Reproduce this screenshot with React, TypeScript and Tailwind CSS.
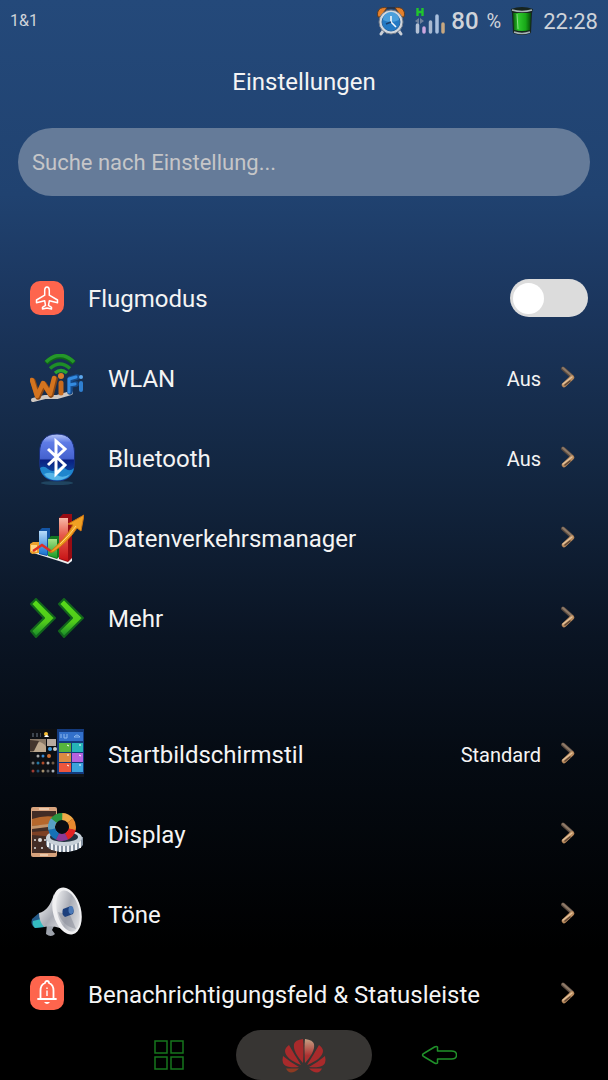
import { useState } from "react"
import type { ReactNode } from "react"

function AlarmIcon() {
  return (
    <svg viewBox="0 0 28 30" className="h-[30px] w-7" aria-hidden="true">
      <path d="M6 25l-2 3M22 25l2 3" stroke="#c9ced6" strokeWidth="3" strokeLinecap="round" />
      <path d="M1 11C-1 5 3 0 10 2L3 11z" fill="#e5802c" stroke="#5b3a20" strokeWidth="1" />
      <path d="M27 11c2-6-2-11-9-9l7 9z" fill="#e5802c" stroke="#5b3a20" strokeWidth="1" />
      <path d="M10 2h8" stroke="#27344c" strokeWidth="2" />
      <circle cx="14" cy="16" r="12" fill="#d3d7dd" stroke="#707987" strokeWidth="1" />
      <circle cx="14" cy="16" r="9" fill="#2379c4" stroke="#2467a5" strokeWidth="1" />
      <path d="M6 14a8 8 0 0 1 16 0q-8 4-16 0z" fill="#4b9fdc" />
      <path d="M14 10v6l5 5" fill="none" stroke="#f4f8fc" strokeWidth="1.6" />
      <path d="M9 18l5-2" stroke="#1b3f6d" strokeWidth="1.5" />
    </svg>
  )
}

function SignalIcon() {
  return (
    <svg viewBox="0 0 30 26" className="h-[26px] w-[30px]" aria-hidden="true">
      <path d="M2.500 0v8M7.500 0v8M2 4h5.500" fill="none" stroke="#20c52d" strokeWidth="2.400" />
      <path d="M0 13l4-3v6zM9 13l-4-3v6z" fill="#6f819c" />
      <g strokeWidth="3.500" strokeLinecap="round">
        <path d="M2.500 17v7" stroke="#b5c2d6" />
        <path d="M9 20v4" stroke="#cda7df" />
        <path d="M15.500 14v10" stroke="#a9b9d0" />
        <path d="M22 8v16" stroke="#a9bfdd" />
        <path d="M28 16v8" stroke="#c7a780" />
      </g>
    </svg>
  )
}

function BatteryIcon() {
  return (
    <svg viewBox="0 0 22 30" className="h-[30px] w-[22px]" aria-hidden="true">
      <defs>
        <linearGradient id="charge">
          <stop offset="0" stopColor="#075d08" />
          <stop offset=".3" stopColor="#2fc92d" />
          <stop offset=".7" stopColor="#18a818" />
          <stop offset="1" stopColor="#064b08" />
        </linearGradient>
      </defs>
      <path d="M0 3q11-4 22 0l-1 4-1 20q-9 4-18 0L1 7z" fill="#17241e" />
      <path d="M2 7h18l-1 17q-8 2-16 0z" fill="url(#charge)" />
      <path d="M1 4q10 3 20 0M3 26q8 3 16 0" fill="none" stroke="#a6b3b5" strokeWidth="1.500" />
      <path d="M6 8l1 15" stroke="#8be086" strokeWidth="1" />
    </svg>
  )
}

function PlaneIcon() {
  return (
    <svg viewBox="0 0 34 34" className="mb-0.5 size-[34px]" aria-hidden="true">
      <rect width="34" height="34" rx="10" fill="#fe654d" />
      <path
        d="M17 6c-1.500 0-2.300 1.500-2.300 3.500v4.700L6.500 19v2.800l8.200-2 .8 4.500-3 2V28l4.500-1 4.500 1v-1.700l-3-2 .8-4.500 8.200 2V19l-8.200-4.800V9.500C19.300 7.500 18.500 6 17 6z"
        fill="none"
        stroke="#fff"
        strokeWidth="1.500"
        strokeLinejoin="round"
      />
    </svg>
  )
}

function BellIcon() {
  return (
    <svg viewBox="0 0 34 34" className="mb-1 size-[34px]" aria-hidden="true">
      <rect width="34" height="34" rx="10" fill="#fe654d" />
      <path
        d="M8 23h18M10.500 22.500v-8c0-4 2-6.500 4.500-7.500V7a2 2 0 0 1 4 0c2.500 1 4.500 3.500 4.500 7.500v8"
        fill="none"
        stroke="#fff"
        strokeWidth="1.800"
        strokeLinecap="round"
      />
      <path d="M17 14.500V20M17 11.500v1.500" stroke="#fff" strokeWidth="1.400" />
      <path d="M14 26h6q-3 4-6 0z" fill="#fff" />
    </svg>
  )
}

function WifiIcon() {
  return (
    <svg viewBox="0 0 54 50" className="h-[50px] w-[54px]" fill="none" strokeLinecap="round" strokeLinejoin="round" aria-hidden="true">
      <path d="M3 46l12-3 12 0 14-4" stroke="#cfc8c2" strokeWidth="4" />
      <path d="M16 9q14-14 28 0" stroke="#0e6518" strokeWidth="5" strokeLinecap="butt" />
      <path d="M16 8q14-13 28 0" stroke="#25972b" strokeWidth="3.500" strokeLinecap="butt" />
      <path d="M20 14.500q10-9 20 0" stroke="#1e8e27" strokeWidth="3.500" strokeLinecap="butt" />
      <path d="M25 19q6-5 12 0" stroke="#27a431" strokeWidth="3.500" strokeLinecap="butt" />
      <path d="M3 27l5 16 6-13 7 11 4-16" stroke="#8a4613" strokeWidth="5.500" />
      <path d="M2 26l5 16 6-13 7 11 4-16" stroke="#d4741f" strokeWidth="4.500" />
      <path d="M31 29v10" stroke="#c96b1d" strokeWidth="5" />
      <circle cx="31" cy="22" r="3" fill="#d97c28" />
      <path d="M40 38V25l7-2M40 31l6-1" stroke="#164b8b" strokeWidth="5.500" />
      <path d="M39 38V25l7-2M39 31l6-1" stroke="#348be1" strokeWidth="3" />
      <path d="M51 29v7" stroke="#2f7fd0" strokeWidth="4" />
      <circle cx="51" cy="23" r="2" fill="#5ca7ed" />
    </svg>
  )
}

function BluetoothIcon() {
  return (
    <svg viewBox="0 0 54 52" className="h-[52px] w-[54px]" aria-hidden="true">
      <defs>
        <linearGradient id="blueGlass" x2="0" y2="1">
          <stop offset="0" stopColor="#b7c6f5" />
          <stop offset=".18" stopColor="#5f7ce6" />
          <stop offset=".52" stopColor="#4562cf" />
          <stop offset=".56" stopColor="#0a2080" />
          <stop offset="1" stopColor="#0d5fb4" />
        </linearGradient>
      </defs>
      <ellipse cx="27" cy="50" rx="16" ry="2" fill="#295b78" opacity=".6" />
      <path
        d="M27 1c12 0 17 7 17.500 18v11C44 42 38 48 27 48S10 42 9.500 30V19C10 8 15 1 27 1z"
        fill="url(#blueGlass)"
        stroke="#182f79"
      />
      <path d="M10 35q4-3 8 1 5 4 9 0 5-4 9 0 4 3 8-1-2 12-17 12.500Q12 47 10 35z" fill="#1f86cd" />
      <path d="M14 41q7-3 13 1t13-1q-4 6-13 6t-13-6z" fill="#55b5e8" />
      <path d="M18 16l17 16-9 9V8l9 8-17 16" fill="none" stroke="#fff" strokeWidth="3" strokeLinejoin="miter" />
    </svg>
  )
}

function ChartIcon() {
  return (
    <svg viewBox="0 0 54 50" className="h-[50px] w-[54px]" aria-hidden="true">
      <defs>
        <linearGradient id="barRed" x2="0" y2="1">
          <stop stopColor="#f8b8a7" />
          <stop offset=".4" stopColor="#e65a4a" />
          <stop offset="1" stopColor="#c71115" />
        </linearGradient>
        <linearGradient id="barBlue" x2="0" y2="1">
          <stop stopColor="#b8dcfa" />
          <stop offset="1" stopColor="#1672cf" />
        </linearGradient>
        <linearGradient id="barGreen" x2="0" y2="1">
          <stop stopColor="#a5e287" />
          <stop offset="1" stopColor="#189a24" />
        </linearGradient>
      </defs>
      <path d="M0 38l29 9 9 3 4-3v-5L2 36z" fill="#eee" />
      <path d="M0 30l3-2h6v11l-7 1-2-2z" fill="#eda12c" />
      <path d="M1 31h6v7l-6-1z" fill="#ffd584" />
      <path d="M9 17l3-3h8v25l-3 3-8-2z" fill="#1455a5" />
      <path d="M9 17h8v24l-8-2z" fill="url(#barBlue)" />
      <path d="M18 25l3-3h9v20l-3 3-9-3z" fill="#137722" />
      <path d="M18 25h9v19l-9-3z" fill="url(#barGreen)" />
      <path d="M29 4l4-4h9v44l-4 4-9-3z" fill="#980c13" />
      <path d="M29 4h9v43l-9-3z" fill="url(#barRed)" />
      <path d="M3 37l9-6 10 7" fill="none" stroke="#df2e25" strokeWidth="2.500" />
      <path d="M20 38Q36 24 43 11l-5-1 16-9-3 16-4-3Q38 28 23 38z" fill="#f0a023" stroke="#cf7412" />
      <path d="M30 30q10-9 16-18" fill="none" stroke="#ffd676" strokeWidth="1" />
    </svg>
  )
}

function MoreIcon() {
  return (
    <svg viewBox="0 0 54 40" className="mb-0.5 h-10 w-[54px]" aria-hidden="true">
      <defs>
        <linearGradient id="moreGreen" x2="0" y2="1">
          <stop stopColor="#58da1a" />
          <stop offset=".6" stopColor="#50cb1a" />
          <stop offset="1" stopColor="#16882c" />
        </linearGradient>
      </defs>
      <g fill="url(#moreGreen)" stroke="#12661c" strokeWidth="2" strokeLinejoin="round">
        <path d="M1 6l5-5 19 19L6 39l-5-6 13-13z" />
        <path d="M29 6l5-5 19 19-19 19-5-6 13-13z" />
      </g>
    </svg>
  )
}

function HomeStyleIcon() {
  const dots = ["#8f8f8f", "#2b91c7", "#d95a30", "#d2d2d2", "#8b6d52", "#c5493c", "#2b6289", "#c9ae82", "#7b7b7b", "#cfd6dd"]
  return (
    <svg viewBox="0 0 54 48" className="mb-1 h-12 w-[54px]" aria-hidden="true">
      <rect width="27" height="48" fill="#0d0f13" />
      <path d="M0 10h16v13H0z" fill="#897866" />
      <path d="M1 20q4-7 9-7 5 2 6 5v5H4z" fill="#bda78d" />
      <path d="M0 11l9 1-5 10H0z" fill="#44352d" />
      <path d="M17 10h9v7h-9z" fill="#b8aaa0" />
      <circle cx="20" cy="20" r="2" fill="#3c9adf" />
      <circle cx="25" cy="20" r="2" fill="#ccc" />
      <path d="M2 4h2v4H2zM6 4h2v4H6zM10 4h1v4h-1z" fill="#3d444d" />
      <circle cx="16" cy="5" r="2" fill="#f6bd32" />
      <path d="M14 8q3-4 5 0z" fill="#fff" />
      {dots.map((color, i) => (
        <circle key={i} cx={3 + (i % 5) * 5} cy={i < 5 ? 34 : 42} r="1.500" fill={color} opacity=".8" />
      ))}
      <circle cx="8" cy="27" r="1.500" fill="#a9a9a9" />
      <circle cx="13" cy="27" r="1.500" fill="#398ad2" />
      <circle cx="19" cy="27" r="2" fill="#cf6e31" />
      <rect x="27" width="27" height="46" fill="#143a7c" />
      <rect x="29" y="3" width="24" height="9" fill="#3270cb" />
      <path d="M31 5v4M34 5v4h3V5M44 8q3-4 6 0z" fill="none" stroke="#8bb7ef" />
      <path d="M29 14h12v9H29z" fill="#56b43d" />
      <path d="M42 14h11v9H42z" fill="#26b5b7" />
      <path d="M29 24h12v9H29z" fill="#dc8a42" />
      <path d="M42 24h11v9H42z" fill="#b662df" />
      <path d="M29 34h12v9H29z" fill="#ee563d" />
      <path d="M42 34h11v9H42z" fill="#3ba2dc" />
      <path d="M37 16l2 1M49 16h2M37 26h2M49 26l2 1M37 36l2 1M49 36h2" stroke="#fff" />
      <path d="M27 45h27v3H27z" fill="#111419" />
    </svg>
  )
}

function DisplayIcon() {
  // clockwise from twelve o'clock
  const ring = ["#efaa48", "#e8892f", "#e42222", "#8c3996", "#1671b7", "#57a0c5", "#299541"]
  return (
    <svg viewBox="0 0 54 52" className="mb-1.5 h-[52px] w-[54px]" aria-hidden="true">
      <rect x="1" y="1" width="26" height="50" rx="2" fill="#d7a37d" />
      <path d="M2 5h24v42H2z" fill="#422c25" />
      <path d="M2 13q12-4 24-2v7L2 20z" fill="#b5672c" />
      <path d="M2 20l24-3v3L2 23z" fill="#c3946a" />
      <path d="M2 26l24-2v7L2 29z" fill="#7d4024" />
      <path d="M9 3h10M10 49h8" stroke="#fff0dc" />
      <g fill="#dedede">
        <circle cx="5" cy="34" r="1" />
        <circle cx="10" cy="34" r="2" />
        <circle cx="15" cy="34" r="1" />
        <circle cx="5" cy="42" r="1" />
        <circle cx="12" cy="42" r="1" />
      </g>
      <path d="M16 31v8q3 7 18 7t19-7v-8z" fill="#8794a3" />
      <path d="M18 35v6M22 37v7M26 38v7M30 39v7M34 39v7M38 39v7M42 38v7M46 37v7M50 35v7" stroke="#f0f3f6" strokeWidth="2" />
      <ellipse cx="34" cy="32" rx="18" ry="8" fill="#c7d0d8" />
      <ellipse cx="34" cy="31" rx="14" ry="5" fill="#223140" />
      <circle cx="32" cy="21" r="7" fill="#080c13" />
      <g fill="none" strokeWidth="7" transform="rotate(-90 32 21)">
        {ring.map((color, i) => (
          <circle key={color} cx="32" cy="21" r="10.500" pathLength={70} stroke={color} strokeDasharray="10.300 59.700" strokeDashoffset={-10 * i} />
        ))}
      </g>
    </svg>
  )
}

function SoundIcon() {
  return (
    <svg viewBox="0 0 54 50" className="mb-1.5 h-[50px] w-[54px]" aria-hidden="true">
      <defs>
        <linearGradient id="horn" x2="1" y2="1">
          <stop stopColor="#fff" />
          <stop offset=".5" stopColor="#a8abb4" />
          <stop offset="1" stopColor="#f3f3f4" />
        </linearGradient>
      </defs>
      <path d="M2 32l7-6 6 14-10 1q-5-3-3-9z" fill="#245a88" />
      <path d="M3 34l8-2 3 8-9 1q-3-3-2-7z" fill="#35bbc0" />
      <path d="M17 37l-1 10q5 4 9 0l-3-4 3-6z" fill="#9ea3ac" />
      <path d="M9 26q10-2 15-19l15 39q-12-9-25-6-5-6-5-14z" fill="url(#horn)" />
      <ellipse cx="37" cy="24" rx="14" ry="24" transform="rotate(-14 37 24)" fill="#f0f0f2" />
      <ellipse cx="38" cy="24" rx="11" ry="21" transform="rotate(-14 38 24)" fill="url(#horn)" />
      <path d="M28 25l12 3 6 14Q32 39 28 25z" fill="#8f939e" opacity=".6" />
      <path d="M33 22l8-3q4 4 2 8l-8 3q-4-3-2-8z" fill="#1c3f7c" />
      <ellipse cx="41" cy="23" rx="2.500" ry="4" fill="#4a79b8" />
    </svg>
  )
}

function Chevron() {
  return (
    <svg viewBox="0 0 14 22" className="mb-1 h-[22px] w-3.5 shrink-0" fill="none" strokeLinecap="round" strokeLinejoin="round" aria-hidden="true">
      <path d="M2 2.500l9 8" stroke="#5c4c40" strokeWidth="4" />
      <path d="M2 2l9 8" stroke="#8f7b69" strokeWidth="2" />
      <path d="M11 11.500l-8 7.500" stroke="#b98a5d" strokeWidth="4.500" />
      <path d="M11 11l-9 7" stroke="#e3c39c" strokeWidth="1.500" />
      <path d="M9 15l-5 4" stroke="#5a4434" strokeWidth="1.500" />
    </svg>
  )
}

function HuaweiLogo() {
  return (
    <svg viewBox="0 0 44 34" className="mt-0.5 h-[34px] w-11" aria-hidden="true">
      <defs>
        <linearGradient id="petal" x2="0" y2="1">
          <stop stopColor="#c5a184" />
          <stop offset=".7" stopColor="#ad3030" />
        </linearGradient>
      </defs>
      <g fill="#a82a2b">
        <path d="M21 24C15 17 11 11 12 5q1-4 9-5 1 8 0 24z" />
        <path d="M23 24C29 17 33 11 32 5q-1-4-9-5-1 8 0 24z" fill="url(#petal)" />
        <path d="M19 26C9 22 3 17 3 12q0-3 4-6 5 9 12 20z" />
        <path d="M25 26C35 22 41 17 41 12q0-3-4-6-5 9-12 20z" />
        <path d="M17 28C9 29 3 28 1 24q-1-3 0-7 7 6 16 11z" />
        <path d="M27 28c8 1 14 0 16-4q1-3 0-7-7 6-16 11z" />
        <path d="M17 29.500q-4 4-8 4-3 0-5-4z" fill="#8d3a22" />
        <path d="M27 29.500q4 4 8 4 3 0 5-4z" />
      </g>
    </svg>
  )
}

interface SettingRowProps {
  icon: ReactNode
  label: string
  value?: string
}

function SettingRow({ icon, label, value }: SettingRowProps) {
  return (
    <li>
      <button type="button" className="flex h-20 w-full items-center gap-6 pr-[33px] pl-[30px] text-left">
        <span className="shrink-0">{icon}</span>
        <span className="flex-1 text-2xl whitespace-nowrap">{label}</span>
        <span className="flex items-center gap-5">
          {value && <span className="text-xl">{value}</span>}
          <Chevron />
        </span>
      </button>
    </li>
  )
}

export default function App() {
  const [flightMode, setFlightMode] = useState(false)

  return (
    <div className="flex h-screen flex-col overflow-hidden bg-[linear-gradient(#24497a,#204270_18%,#1b365e_28%,#132742_43%,#0a1423_59%,#050b13_70%,#000_88%)] font-[Roboto,sans-serif] text-[#f4f4f4]">
      {/* Status bar */}
      <header className="flex h-[42px] shrink-0 items-center justify-between px-2.5 text-[#cfd3d9]">
        <span className="text-base">1&amp;1</span>
        <div className="flex items-center gap-2.5">
          <AlarmIcon />
          <div className="flex items-center gap-1.5">
            <SignalIcon />
            <span className="text-2xl font-medium">80</span>
            <span className="pl-0.5 text-xl">%</span>
          </div>
          <BatteryIcon />
          <time className="text-[22px]">22:28</time>
        </div>
      </header>

      {/* Settings */}
      <main className="min-h-0 flex-1 overflow-y-auto [scrollbar-width:none]">
        <h1 className="flex h-[86px] items-center justify-center pb-1.5 text-2xl">Einstellungen</h1>
        <div className="px-[18px]">
          <input
            type="search"
            aria-label="Suche nach Einstellung"
            placeholder="Suche nach Einstellung..."
            className="h-[68px] w-full rounded-[34px] bg-[#657b99] px-3.5 text-[22px] text-white outline-none placeholder:text-[#c5c6c8]"
          />
        </div>

        <ul className="mt-[63px]">
          <li className="flex h-20 items-center gap-6 pr-5 pl-[30px]">
            <PlaneIcon />
            <label htmlFor="flight" className="flex-1 text-2xl">
              Flugmodus
            </label>
            <input
              id="flight"
              type="checkbox"
              role="switch"
              checked={flightMode}
              onChange={(e) => setFlightMode(e.target.checked)}
              className="mb-0.5 flex h-[38px] w-[78px] appearance-none items-center rounded-full bg-[#dcdcdc] px-[3px] before:size-[31px] before:rounded-full before:bg-white checked:justify-end checked:bg-[#35b52b]"
            />
          </li>
          <SettingRow icon={<WifiIcon />} label="WLAN" value="Aus" />
          <SettingRow icon={<BluetoothIcon />} label="Bluetooth" value="Aus" />
          <SettingRow icon={<ChartIcon />} label="Datenverkehrsmanager" />
          <SettingRow icon={<MoreIcon />} label="Mehr" />
        </ul>

        <ul className="mt-14">
          <SettingRow icon={<HomeStyleIcon />} label="Startbildschirmstil" value="Standard" />
          <SettingRow icon={<DisplayIcon />} label="Display" />
          <SettingRow icon={<SoundIcon />} label="Töne" />
          <SettingRow icon={<BellIcon />} label="Benachrichtigungsfeld &amp; Statusleiste" />
        </ul>
      </main>

      {/* Navigation bar */}
      <nav className="grid h-[50px] shrink-0 grid-cols-[1fr_136px_1fr] bg-black">
        <button type="button" aria-label="Letzte Apps" className="flex items-center justify-end pr-[52px]">
          <svg viewBox="0 0 30 30" className="size-[30px]" fill="none" stroke="#16751c" strokeWidth="1.500">
            <path d="M1 1h12v12H1zM17 1h12v12H17zM1 17h12v12H1zM17 17h12v12H17z" />
          </svg>
        </button>
        <button type="button" aria-label="Startseite" className="flex items-center justify-center rounded-full bg-[#373533]">
          <HuaweiLogo />
        </button>
        <button type="button" aria-label="Zurück" className="flex items-center pl-[49px]">
          <svg viewBox="0 0 36 20" className="h-5 w-9" fill="none" stroke="#20912a" strokeWidth="1.500" strokeLinejoin="round">
            <path d="M1.500 10q0-1 2-2l10-6q2-1 3 0v4h14q5 0 5 4t-5 4h-14v4q-1 1-3 0l-10-6q-2-1-2-2z" />
          </svg>
        </button>
      </nav>
    </div>
  )
}
